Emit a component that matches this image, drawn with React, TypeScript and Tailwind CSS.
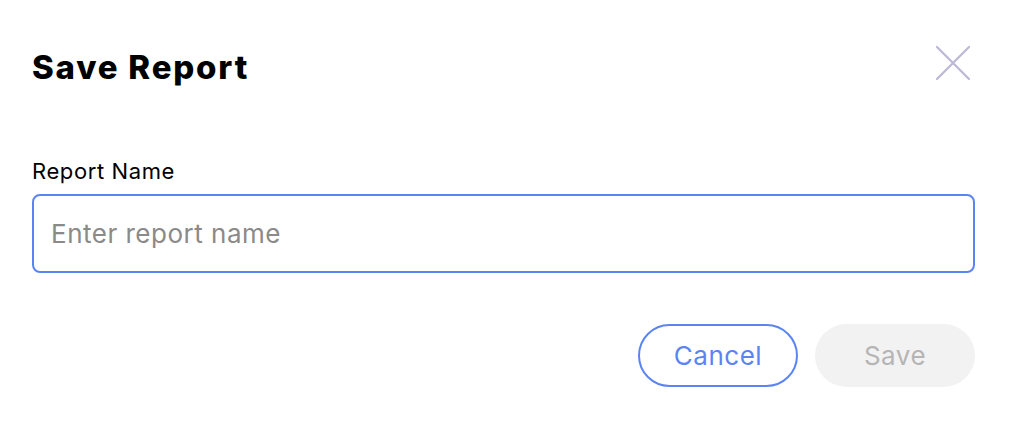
import React, { useState } from "react";

const App: React.FC = () => {
  const [name, setName] = useState("");

  return (
    <div className="w-[1022px] h-[432px] bg-white px-8 pt-[42px] font-['Inter',sans-serif]">
      <div className="flex items-center justify-between h-[52px]">
        <h2 className="text-[33px] font-extrabold tracking-[1.8px] text-black">Save Report</h2>
        <button className="w-[36px] h-[36px] mr-[19px] -mt-[10px] flex items-center justify-center" aria-label="Close">
          <svg width="36" height="36" viewBox="0 0 36 36" fill="none">
            <path d="M2 2L34 34M34 2L2 34" stroke="#bcb8d6" strokeWidth="2.2" strokeLinecap="round" />
          </svg>
        </button>
      </div>

      <label className="block mt-[64px] text-[22px] leading-[26px] tracking-[0.6px] text-black">Report Name</label>
      <input
        value={name}
        onChange={(e) => setName(e.target.value)}
        placeholder="Enter report name"
        className="block mt-[10px] w-[943px] h-[79px] rounded-[8px] border-2 border-[#5b84f3] px-[17px] text-[26px] tracking-[0.5px] text-black placeholder:text-[#8a8a8a] outline-none"
      />

      <div className="flex justify-end gap-[17px] mt-[51px] pr-[15px]">
        <button className="w-[160px] h-[63px] rounded-full border-2 border-[#5b84f3] text-[26px] tracking-[0.5px] text-[#5b84f3]">
          Cancel
        </button>
        <button disabled className="w-[160px] h-[63px] rounded-full bg-[#f2f2f2] text-[26px] tracking-[0.5px] text-[#b5b5b5]">
          Save
        </button>
      </div>
    </div>
  );
};

export default App;
